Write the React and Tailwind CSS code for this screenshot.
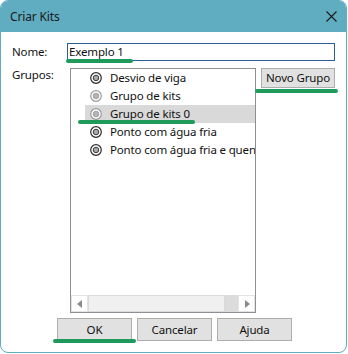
const items = [
  { label: 'Desvio de viga', muted: false, selected: false },
  { label: 'Grupo de kits', muted: true, selected: false },
  { label: 'Grupo de kits 0', muted: true, selected: true },
  { label: 'Ponto com água fria', muted: false, selected: false },
  { label: 'Ponto com água fria e quente', muted: false, selected: false },
];

function RadioIcon({ muted }) {
  const ring = muted ? '#9a9a9a' : '#2b2b2b';
  const dot = muted ? '#b4b4b4' : '#a8a8a8';
  return (
    <svg width="12" height="12" viewBox="0 0 12 12" className="shrink-0">
      <circle cx="6" cy="6" r="5.3" fill="#fff" stroke={ring} strokeWidth="1.2" />
      <circle cx="6" cy="6" r="2.8" fill={dot} stroke={ring} strokeWidth="0.9" />
    </svg>
  );
}

function Mark({ className }) {
  return <div className={`absolute h-[3.5px] rounded-full bg-[#1f9a5b] ${className}`} />;
}

export default function App() {
  return (
    <div className="relative w-[348px] h-[354px] bg-white text-[11.5px] tracking-[-0.15px] text-[#111] font-['Noto_Sans',sans-serif] leading-none">
      <div className="flex flex-col w-[347px] h-[353px] border border-[#60acc1] rounded-[8px] overflow-hidden bg-white">
        <div className="flex items-center justify-between h-[31px] bg-[#60acc1] pl-[9px] pr-[9px] shrink-0">
          <span className="text-[12px] text-[#1a1a1a]">Criar Kits</span>
          <svg width="11" height="11" viewBox="0 0 11 11">
            <path d="M0.5 0.5 L10.5 10.5 M10.5 0.5 L0.5 10.5" stroke="#1a1a1a" strokeWidth="1.1" />
          </svg>
        </div>

        <div className="flex flex-col pl-[11px] pt-[11px]">
          <div className="flex items-center h-[18px]">
            <span className="w-[55px]">Nome:</span>
            <div className="flex items-center w-[268px] h-[18px] border border-[#2c5d9c] px-[1px]">
              Exemplo 1
            </div>
          </div>

          <div className="flex mt-[7px]">
            <span className="w-[58px] pt-[1px]">Grupos:</span>
            <div className="flex flex-col w-[186px] h-[245px] border border-[#8c8f94] bg-white">
              <div className="flex flex-col flex-1 overflow-hidden">
                {items.map((it) => (
                  <div
                    key={it.label}
                    className={`flex items-center h-[18px] ml-[14px] pl-[5px] gap-[8px] whitespace-nowrap ${it.selected ? 'bg-[#d9d9d9]' : ''}`}
                  >
                    <RadioIcon muted={it.muted} />
                    <span>{it.label}</span>
                  </div>
                ))}
              </div>
              <div className="flex h-[17px] shrink-0">
                <div className="flex items-center justify-center w-[17px] border border-[#e3e3e3] bg-white">
                  <svg width="6" height="8" viewBox="0 0 6 8"><path d="M5 0 L0 4 L5 8 Z" fill="#8a8a8a" /></svg>
                </div>
                <div className="w-[137px] border border-[#dadada] bg-[#f0f0f0]" />
                <div className="flex-1 bg-[#dcdcdc]" />
                <div className="flex items-center justify-center w-[17px] border border-[#e3e3e3] bg-white">
                  <svg width="6" height="8" viewBox="0 0 6 8"><path d="M1 0 L6 4 L1 8 Z" fill="#8a8a8a" /></svg>
                </div>
              </div>
            </div>
            <button className="flex items-center justify-center w-[74px] h-[20px] ml-[5px] border border-[#adadad] bg-[#e1e1e1]">
              Novo Grupo
            </button>
          </div>

          <div className="flex gap-[5px] mt-[5px] ml-[45px]">
            <button className="flex items-center justify-center w-[75px] h-[23px] border border-[#adadad] bg-[#e1e1e1]">OK</button>
            <button className="flex items-center justify-center w-[75px] h-[23px] border border-[#adadad] bg-[#e1e1e1]">Cancelar</button>
            <button className="flex items-center justify-center w-[75px] h-[23px] border border-[#adadad] bg-[#e1e1e1]">Ajuda</button>
          </div>
        </div>
      </div>

      <Mark className="left-[66px] top-[59px] w-[67px]" />
      <Mark className="left-[78px] top-[120px] w-[117px]" />
      <Mark className="left-[255px] top-[89px] w-[83px]" />
      <Mark className="left-[53px] top-[339px] w-[83px]" />
    </div>
  );
}
